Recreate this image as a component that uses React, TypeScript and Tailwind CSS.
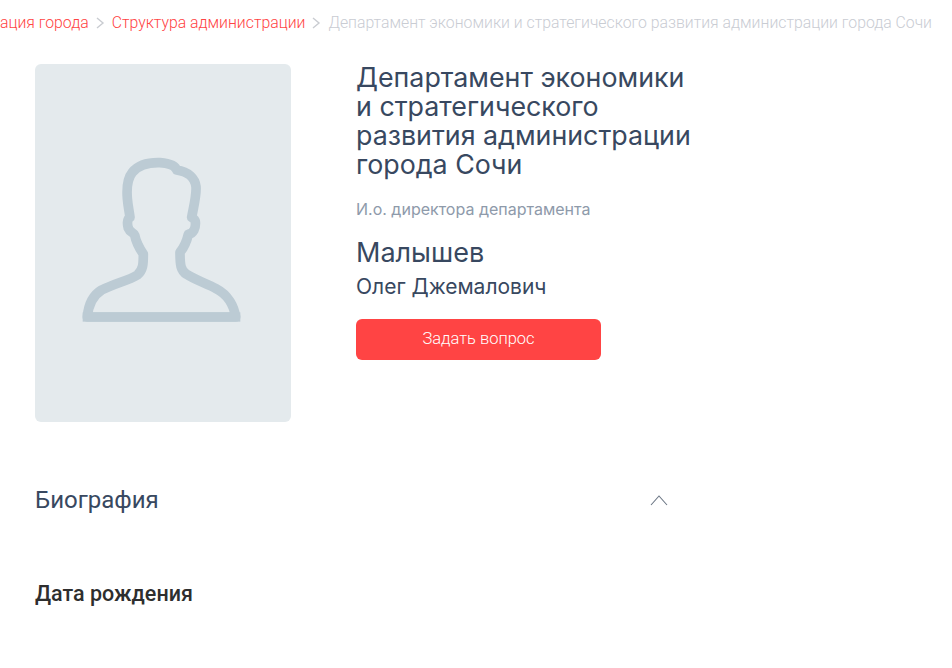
import React from 'react';

const headingFont = "font-['Inter','Roboto',sans-serif]";

const Chevron = () => (
  <svg width="9" height="12" viewBox="0 0 9 12" fill="none" className="shrink-0 mx-[7px]">
    <path d="M1 1 L7 6 L1 11" stroke="#c9ccd1" strokeWidth="1.4" />
  </svg>
);

const Silhouette = () => (
  <svg width="200" height="200" viewBox="0 0 600 600" fill="none" className="mr-[6px] mb-[6px]">
    <path
      d="M82 531 H527 C522 500 505 465 470 447 C440 430 405 420 380 403 C362 392 360 375 360 337 C372 322 380 305 385 283 C400 280 408 265 406 245 C405 238 400 235 395 232 C402 195 410 165 408 140 C405 115 385 95 350 90 C345 75 325 70 300 68 C265 67 235 75 217 97 C200 118 200 150 202 175 C204 200 208 215 210 232 C200 238 202 255 205 265 C210 278 222 278 224 285 C228 305 238 325 250 342 C250 370 250 390 232 405 C205 422 165 430 125 450 C100 465 85 495 82 531 Z"
      stroke="#bccbd4"
      strokeWidth="29"
      strokeLinejoin="round"
    />
    <rect x="68" y="517" width="473" height="28" fill="#bccbd4" />
  </svg>
);

const App = () => {
  return (
    <div className="w-[952px] h-[668px] overflow-hidden bg-white">
      <div className="flex justify-end items-center h-[46px] pr-[20px] whitespace-nowrap font-['Roboto',sans-serif] font-light text-[15.8px]">
        <a className="text-[#ff4444]">Администрация города</a>
        <Chevron />
        <a className="text-[#ff4444]">Структура администрации</a>
        <Chevron />
        <span className="text-[#c9ccd3]">Департамент экономики и стратегического развития администрации города Сочи</span>
      </div>

      <div className="flex pl-[35px] pt-[18px]">
        <div className="w-[256px] h-[358px] shrink-0 rounded-[6px] bg-[#e4eaed] flex items-center justify-center">
          <Silhouette />
        </div>

        <div className={`ml-[65px] w-[345px] ${headingFont} text-[#384860]`}>
          <h1 className="-mt-[1px] text-[26.8px] leading-[29px] font-normal">
            Департамент экономики и стратегического развития администрации города Сочи
          </h1>
          <p className="mt-[19px] text-[16px] leading-[22px] text-[#8e9aaa]">И.о. директора департамента</p>
          <p className="mt-[17px] text-[27px] leading-[32px]">Малышев</p>
          <p className="mt-[4px] text-[21px] leading-[28px]">Олег Джемалович</p>
          <button className="mt-[18px] w-[245px] h-[41px] rounded-[6px] bg-[#ff4444] text-white text-[16.5px] font-['Roboto',sans-serif] font-light">
            Задать вопрос
          </button>
        </div>
      </div>

      <div className="w-[634px] ml-[35px] mt-[60px] flex items-center justify-between">
        <h2 className="text-[24px] leading-[36px] font-normal text-[#384860] font-['Roboto',sans-serif]">Биография</h2>
        <svg width="20" height="12" viewBox="0 0 20 12" fill="none">
          <path d="M2 11 L10 2 L18 11" stroke="#6b7684" strokeWidth="1.1" />
        </svg>
      </div>

      <h3 className="ml-[35px] mt-[61px] text-[21.5px] leading-[30px] font-medium text-[#2e2e2e] font-['Roboto',sans-serif]">
        Дата рождения
      </h3>
    </div>
  );
};

export default App;
